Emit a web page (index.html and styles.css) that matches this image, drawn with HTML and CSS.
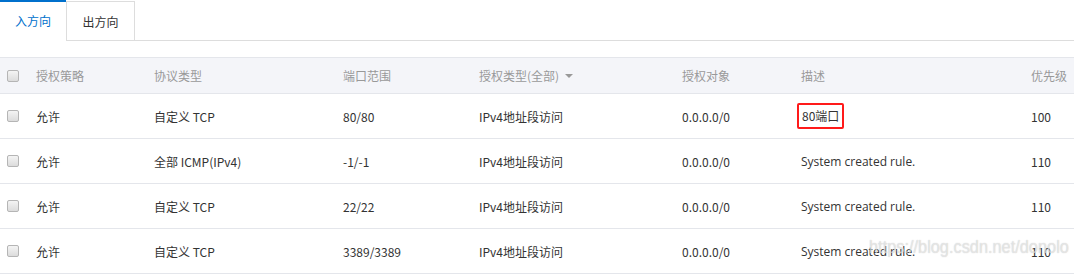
FILE: index.html
```html
<!DOCTYPE html>
<html lang="zh">
<head>
<meta charset="utf-8">
<link rel="stylesheet" href="styles.css">
</head>
<body>
<div class="tabs">
  <div class="tab active">入方向</div>
  <div class="tab">出方向</div>
  <div class="tab-rest"></div>
</div>
<div class="table">
  <div class="row head">
    <div class="cell"><span class="cb"></span></div>
    <div class="cell">授权策略</div>
    <div class="cell">协议类型</div>
    <div class="cell">端口范围</div>
    <div class="cell">授权类型(全部) <span class="caret"></span></div>
    <div class="cell">授权对象</div>
    <div class="cell">描述</div>
    <div class="cell">优先级</div>
  </div>
  <div class="row">
    <div class="cell"><span class="cb"></span></div>
    <div class="cell">允许</div>
    <div class="cell">自定义 TCP</div>
    <div class="cell">80/80</div>
    <div class="cell">IPv4地址段访问</div>
    <div class="cell">0.0.0.0/0</div>
    <div class="cell"><span class="mark">80端口</span></div>
    <div class="cell">100</div>
  </div>
  <div class="row">
    <div class="cell"><span class="cb"></span></div>
    <div class="cell">允许</div>
    <div class="cell">全部 ICMP(IPv4)</div>
    <div class="cell">-1/-1</div>
    <div class="cell">IPv4地址段访问</div>
    <div class="cell">0.0.0.0/0</div>
    <div class="cell latin">System created rule.</div>
    <div class="cell">110</div>
  </div>
  <div class="row">
    <div class="cell"><span class="cb"></span></div>
    <div class="cell">允许</div>
    <div class="cell">自定义 TCP</div>
    <div class="cell">22/22</div>
    <div class="cell">IPv4地址段访问</div>
    <div class="cell">0.0.0.0/0</div>
    <div class="cell latin">System created rule.</div>
    <div class="cell">110</div>
  </div>
  <div class="row">
    <div class="cell"><span class="cb"></span></div>
    <div class="cell">允许</div>
    <div class="cell">自定义 TCP</div>
    <div class="cell">3389/3389</div>
    <div class="cell">IPv4地址段访问</div>
    <div class="cell">0.0.0.0/0</div>
    <div class="cell latin">System created rule.</div>
    <div class="cell">110</div>
  </div>
  <div class="watermark">https://blog.csdn.net/donolo</div>
</div>
</body>
</html>
```

FILE: styles.css
```css
html, body {
  margin: 0;
  padding: 0;
  background: #fff;
}
body {
  width: 1074px;
  height: 276px;
  overflow: hidden;
  font-family: "Open Sans", "Noto Sans CJK SC", sans-serif;
  font-size: 12px;
  color: #333;
}
.tabs {
  display: flex;
  height: 41px;
}
.tab {
  box-sizing: border-box;
  display: flex;
  align-items: center;
  justify-content: center;
  font-family: "Noto Sans CJK SC", sans-serif;
  font-size: 12px;
  color: #333;
  border: 1px solid #ddd;
  margin-top: 1px;
  height: 40px;
  width: 69px;
}
.tab.active {
  width: 66px;
  margin-top: 0;
  height: 41px;
  border: none;
  border-top: 2px solid #0070cc;
  color: #0070cc;
  padding-bottom: 2px;
}
.tab-rest {
  flex: 1;
  border-bottom: 1px solid #ddd;
}
.table {
  position: relative;
  margin-top: 16px;
  border-top: 1px solid #e4e6eb;
}
.row {
  display: grid;
  grid-template-columns: 36px 118px 189px 136px 203px 119px 230px 43px;
  height: 44px;
  border-bottom: 1px solid #e4e6eb;
  align-items: center;
}
.row.head {
  height: 35px;
  background: #f4f5f9;
  color: #999;
}
.cell {
  font-family: "Noto Sans CJK SC", sans-serif;
  white-space: nowrap;
  display: flex;
  align-items: center;
}
.cell:first-child {
  padding-left: 7px;
}
.cell.latin {
  font-family: "Open Sans", "Noto Sans CJK SC", sans-serif;
}
.cb {
  display: inline-block;
  width: 10px;
  height: 10px;
  border: 1px solid #b5b5b5;
  border-radius: 2px;
  background: linear-gradient(#f4f4f4, #dcdcdc);
}
.caret {
  display: inline-block;
  width: 0;
  height: 0;
  margin-left: 6px;
  border-left: 4px solid transparent;
  border-right: 4px solid transparent;
  border-top: 4px solid #999;
}
.mark {
  margin-left: -4px;
  padding: 2px 3px;
  border: 2px solid #ff1a1a;
  border-radius: 2px;
  line-height: 18px;
}
.watermark {
  position: absolute;
  left: 869px;
  top: 178px;
  font-family: "Liberation Sans", sans-serif;
  font-size: 19px;
  white-space: nowrap;
  transform: scaleX(0.86);
  transform-origin: left top;
  color: rgba(255, 255, 255, 0.5);
  text-shadow: 0 0 1px rgba(150, 150, 150, 0.6);
  pointer-events: none;
}
```
